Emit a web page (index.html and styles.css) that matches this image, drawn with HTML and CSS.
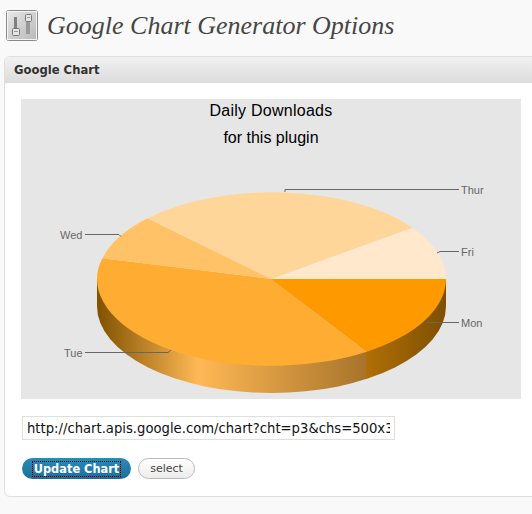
FILE: index.html
```html
<!DOCTYPE html>
<html lang="en">
<head>
<meta charset="utf-8">
<title>Google Chart Generator Options</title>
<link rel="stylesheet" href="styles.css">
</head>
<body>
<div class="page-head">
  <svg class="page-icon" width="32" height="32" viewBox="0 0 32 32">
    <defs>
      <linearGradient id="ig" x1="0" y1="0" x2="1" y2="1"><stop offset="0" stop-color="#e8e8e8"/><stop offset="1" stop-color="#b8b8b8"/></linearGradient>
    </defs>
    <rect x=".5" y=".5" width="31" height="30" rx="2" fill="url(#ig)" stroke="#8a8a8a"/>
    <rect x="1.500" y="1.500" width="29" height="28" fill="none" stroke="#f4f4f4"/>
    <rect x="8" y="7" width="3" height="12" fill="#808080"/>
    <rect x="6.500" y="18.500" width="7" height="7" rx="1" fill="#e6e6e6" stroke="#777"/>
    <rect x="8" y="21" width="4" height="1" fill="#999"/>
    <rect x="20" y="10" width="4" height="14" fill="#999"/>
    <rect x="19.500" y="4.500" width="6" height="7" rx="1" fill="#e6e6e6" stroke="#777"/>
    <rect x="21" y="7" width="3" height="1" fill="#999"/>
  </svg>
  <h2 class="page-title">Google Chart Generator Options</h2>
</div>
<div class="panel">
  <h3 class="panel-head">Google Chart</h3>
  <div class="panel-body">
    <svg class="chart" width="500" height="300" viewBox="21 99 500 300">
      <defs>
        <linearGradient id="side" gradientUnits="userSpaceOnUse" x1="97" y1="0" x2="446" y2="0">
          <stop offset="0" stop-color="#7f5200"/>
          <stop offset=".29" stop-color="#ffb855"/>
          <stop offset=".77" stop-color="#a8742a"/>
          <stop offset=".77" stop-color="#b06f08"/>
          <stop offset="1" stop-color="#7f4f00"/>
        </linearGradient>
      </defs>
      <rect x="21" y="99" width="500" height="300" fill="#e6e6e6"/>
      <text class="ct ct-wide" x="271" y="116">Daily Downloads</text>
      <text class="ct" x="271" y="143">for this plugin</text>
      <path d="M97 279V306A174.500 87 0 0 0 446 306V279Z" fill="url(#side)"/>
      <path d="M271.500 279L446 279A174.500 87 0 0 1 367.500 351.500Z" fill="#ff9900"/>
      <path d="M271.500 279L367.500 351.500A174.500 87 0 0 1 97 279Q97 268 102.500 258.300Z" fill="#ffac33"/>
      <path d="M271.500 279L102.500 258.300A174.500 87 0 0 1 147.500 218.300Z" fill="#ffc266"/>
      <path d="M271.500 279L147.500 218.300A174.500 87 0 0 1 412.500 227.700Z" fill="#ffd699"/>
      <path d="M271.500 279L412.500 227.700A174.500 87 0 0 1 446 279Z" fill="#ffe8cc"/>
      <g class="lead">
        <path d="M285 192V189.500H459"/>
        <path d="M437 253L440 251.500H459"/>
        <path d="M424 321L427 322.500H459"/>
        <path d="M85 234.500H119L121 236.500"/>
        <path d="M85 352.500H168L171 350"/>
      </g>
      <text class="lb" x="461" y="194">Thur</text>
      <text class="lb" x="461" y="256">Fri</text>
      <text class="lb" x="461" y="327">Mon</text>
      <text class="lb" x="60" y="239">Wed</text>
      <text class="lb" x="64" y="357">Tue</text>
    </svg>
    <input class="url" type="text" value="http://chart.apis.google.com/chart?cht=p3&amp;chs=500x300&amp;chd=t:30,50,20" readonly>
    <div class="actions">
      <button class="btn-primary" type="button"><span class="focus">Update Chart</span></button>
      <button class="btn-secondary" type="button">select</button>
    </div>
  </div>
</div>
</body>
</html>
```
FILE: styles.css
```css
html, body { margin: 0; padding: 0; }
body {
  width: 532px;
  height: 514px;
  overflow: hidden;
  background: #f9f9f9;
  font-family: "DejaVu Sans", sans-serif;
}
.page-head {
  display: flex;
  align-items: flex-start;
  height: 56px;
  padding: 10px 0 0 6px;
  box-sizing: border-box;
}
.page-icon { display: block; flex: none; }
.page-title {
  margin: 0 0 0 9px;
  font: italic 400 26px/32px "Liberation Serif", serif;
  color: #464646;
  white-space: nowrap;
}
.panel {
  margin: 0 -20px 0 4px;
  border: 1px solid #dfdfdf;
  border-radius: 6px;
  background: #fff;
  height: 441px;
  box-sizing: border-box;
}
.panel-head {
  margin: 0;
  height: 26px;
  padding: 0 0 0 9px;
  border-radius: 5px 5px 0 0;
  background: linear-gradient(#f1f1f1, #dcdcdc);
  font: 700 11.600px/27px "DejaVu Sans", sans-serif;
  color: #333;
}
.panel-body { padding: 16px 0 0 16px; }
.chart { display: block; }
.url {
  display: block;
  box-sizing: border-box;
  width: 373px;
  height: 24px;
  margin: 17px 0 0 1px;
  padding: 1px 4px;
  border: 1px solid #dfdfdf;
  background: #fff;
  font: 13.200px "DejaVu Sans", sans-serif;
  color: #111;
  outline: 0;
}
.actions {
  display: flex;
  align-items: center;
  gap: 7px;
  margin: 18px 0 0 1px;
}
.btn-primary {
  box-sizing: border-box;
  width: 109px;
  height: 21px;
  padding: 0;
  display: flex;
  align-items: center;
  justify-content: center;
  border: 0;
  border-radius: 11px;
  background: linear-gradient(#2b8ab8, #1c6e9a);
  color: #fff;
  font: 700 11.400px "DejaVu Sans", sans-serif;
}
.focus {
  display: block;
  padding: 1px 2px;
  line-height: 14px;
  outline: 1px dotted #000;
  outline-offset: -1px;
}
.btn-secondary {
  box-sizing: border-box;
  width: 57px;
  height: 21px;
  padding: 0;
  border: 1px solid #bbb;
  border-radius: 11px;
  background: linear-gradient(#fff, #ececec);
  color: #464646;
  font: 400 11px "DejaVu Sans", sans-serif;
}
.ct {
  font: 16px "Liberation Sans", sans-serif;
  fill: #000;
  text-anchor: middle;
}
.ct-wide { letter-spacing: .25px; }
.lb {
  font: 11px "Liberation Sans", sans-serif;
  fill: #666;
}
.lead path { fill: none; stroke: #666; stroke-width: 1; }
```
